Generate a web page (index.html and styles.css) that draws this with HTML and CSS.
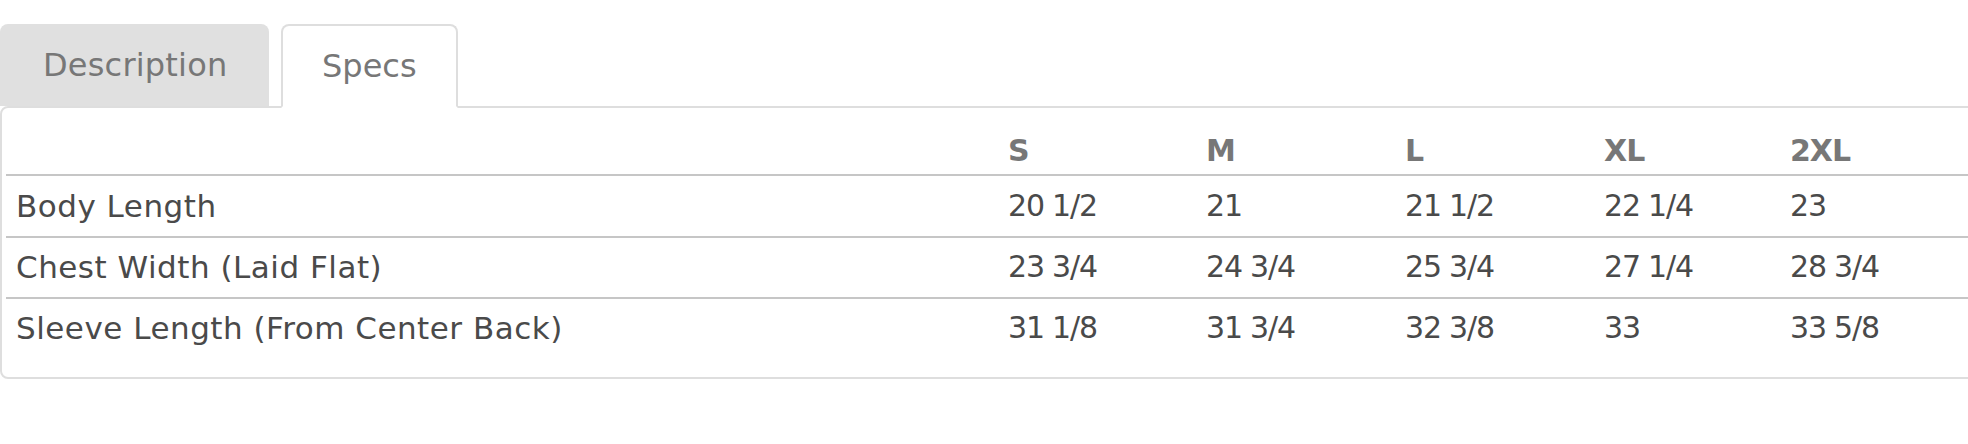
FILE: index.html
```html
<!DOCTYPE html>
<html lang="en">
<head>
<meta charset="utf-8">
<title>Specs</title>
<link rel="stylesheet" href="styles.css">
</head>
<body>
<div class="product-tabs">
  <ul class="tabs">
    <li class="tab">Description</li>
    <li class="tab active">Specs</li>
  </ul>
  <div class="panel">
    <table class="specs">
      <colgroup>
        <col class="c-label">
        <col class="c-s">
        <col class="c-m">
        <col class="c-l">
        <col class="c-xl">
        <col class="c-2xl">
      </colgroup>
      <thead>
        <tr><th></th><th>S</th><th>M</th><th>L</th><th>XL</th><th>2XL</th></tr>
      </thead>
      <tbody>
        <tr><td class="label">Body Length</td><td>20 1/2</td><td>21</td><td>21 1/2</td><td>22 1/4</td><td>23</td></tr>
        <tr><td class="label">Chest Width (Laid Flat)</td><td>23 3/4</td><td>24 3/4</td><td>25 3/4</td><td>27 1/4</td><td>28 3/4</td></tr>
        <tr><td class="label">Sleeve Length (From Center Back)</td><td>31 1/8</td><td>31 3/4</td><td>32 3/8</td><td>33</td><td>33 5/8</td></tr>
      </tbody>
    </table>
  </div>
</div>
</body>
</html>
```
FILE: styles.css
```css
html, body {
  margin: 0;
  padding: 0;
  overflow: hidden;
  background: #ffffff;
}

body {
  font-family: "DejaVu Sans", "Liberation Sans", sans-serif;
  color: #4a4a4a;
}

.product-tabs {
  padding-top: 24px;
  width: 2020px;
}

.tabs {
  display: flex;
  align-items: flex-end;
  gap: 12px;
  list-style: none;
  margin: 0 0 -2px;
  padding: 0;
  position: relative;
  z-index: 1;
}

.tab {
  box-sizing: border-box;
  height: 82px;
  margin-bottom: 2px;
  display: flex;
  align-items: center;
  font-size: 32px;
  color: #777777;
  background: #e0e0e0;
  border-radius: 8px 8px 0 0;
}

.tab:first-child {
  width: 269px;
  padding-left: 43px;
  letter-spacing: 0.2px;
}

.tab.active {
  height: 84px;
  margin-bottom: 0;
  padding: 0 39px;
  background: #ffffff;
  border: 2px solid #dedede;
  border-bottom-color: #ffffff;
}

.panel {
  border: 2px solid #dedede;
  border-radius: 8px 0 0 8px;
  padding: 0 4px 19px;
}

.specs {
  border-collapse: separate;
  border-spacing: 0;
  table-layout: fixed;
  width: 1976px;
}

.c-label { width: 994px; }
.c-s { width: 198px; }
.c-m { width: 199px; }
.c-l { width: 199px; }
.c-xl { width: 186px; }
.c-2xl { width: 200px; }

.specs th {
  text-align: left;
  font-size: 30px;
  font-weight: bold;
  color: #777777;
  letter-spacing: -1px;
  line-height: 42px;
  padding: 22px 8px 2px;
  border-bottom: 2px solid #c6c6c6;
}

.specs td {
  font-size: 30px;
  line-height: 42px;
  padding: 9px 8px 9px;
  color: #4a4a4a;
  letter-spacing: -1.2px;
  white-space: nowrap;
}

.specs tbody tr + tr td {
  padding-top: 8px;
  border-top: 2px solid #c6c6c6;
}

.specs td.label {
  font-size: 31px;
  padding-left: 10px;
  letter-spacing: 0.5px;
}
```
